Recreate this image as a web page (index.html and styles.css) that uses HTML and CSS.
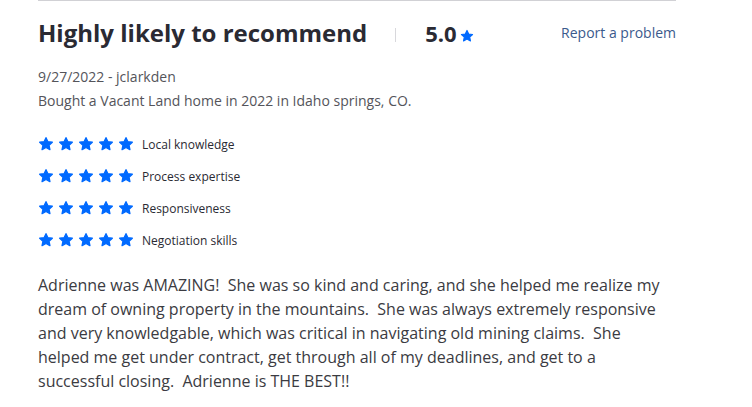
FILE: index.html
```html
<!DOCTYPE html>
<html>
<head>
<meta charset="utf-8">
<link rel="stylesheet" href="styles.css">
</head>
<body>
<svg width="0" height="0" class="defs">
  <defs>
    <symbol id="star" viewBox="0 0 24 24">
      <polygon points="12,2.5 14.9,8.6 21.5,9.4 16.6,13.9 17.9,20.5 12,17.2 6.1,20.5 7.4,13.9 2.5,9.4 9.1,8.6" fill="#006aff" stroke="#006aff" stroke-width="2" stroke-linejoin="round"/>
    </symbol>
  </defs>
</svg>
<div class="review">
  <div class="header">
    <h2 class="title">Highly likely to recommend</h2>
    <span class="sep"></span>
    <span class="score">5.0</span>
    <svg class="score-star"><use href="#star"/></svg>
    <a class="report">Report a problem</a>
  </div>
  <div class="meta">9/27/2022 - jclarkden</div>
  <div class="meta">Bought a Vacant Land home in 2022 in Idaho springs, CO.</div>
  <div class="ratings">
    <div class="rating"><span class="stars"><svg><use href="#star"/></svg><svg><use href="#star"/></svg><svg><use href="#star"/></svg><svg><use href="#star"/></svg><svg><use href="#star"/></svg></span><span class="label">Local knowledge</span></div>
    <div class="rating"><span class="stars"><svg><use href="#star"/></svg><svg><use href="#star"/></svg><svg><use href="#star"/></svg><svg><use href="#star"/></svg><svg><use href="#star"/></svg></span><span class="label">Process expertise</span></div>
    <div class="rating"><span class="stars"><svg><use href="#star"/></svg><svg><use href="#star"/></svg><svg><use href="#star"/></svg><svg><use href="#star"/></svg><svg><use href="#star"/></svg></span><span class="label">Responsiveness</span></div>
    <div class="rating"><span class="stars"><svg><use href="#star"/></svg><svg><use href="#star"/></svg><svg><use href="#star"/></svg><svg><use href="#star"/></svg><svg><use href="#star"/></svg></span><span class="label">Negotiation skills</span></div>
  </div>
  <p class="text">Adrienne was AMAZING!&nbsp; She was so kind and caring, and she helped me realize my dream of owning property in the mountains.&nbsp; She was always extremely responsive and very knowledgable, which was critical in navigating old mining claims.&nbsp; She helped me get under contract, get through all of my deadlines, and get to a successful closing.&nbsp; Adrienne is THE BEST!!</p>
</div>
</body>
</html>
```
FILE: styles.css
```css
html, body {
  margin: 0;
  padding: 0;
  background: #fff;
  font-family: "Open Sans", "Liberation Sans", sans-serif;
}
.defs { position: absolute; }
.review {
  margin-left: 38px;
  width: 638px;
  border-top: 1px solid #d1d1d5;
}
.header {
  display: flex;
  align-items: center;
  margin-top: 15px;
  height: 34px;
}
.title {
  margin: 0;
  font-size: 24px;
  font-weight: 700;
  color: #2a2a33;
  line-height: 34px;
}
.sep {
  width: 1px;
  height: 14px;
  background: #d8d8dc;
  margin: 3px 29px 0 28px;
}
.score {
  font-size: 22px;
  font-weight: 700;
  color: #2a2a33;
  line-height: 34px;
}
.score-star {
  width: 14px;
  height: 14px;
  margin: 6px 0 0 3px;
}
.report {
  margin-left: auto;
  font-size: 14px;
  color: #3b5a8c;
  line-height: 20px;
  margin-top: -1px;
}
.meta {
  font-size: 14px;
  color: #54545a;
  line-height: 24px;
}
.header + .meta { margin-top: 15px; }
.ratings {
  margin-top: 21px;
  display: flex;
  flex-direction: column;
  gap: 12px;
}
.rating {
  display: flex;
  align-items: center;
  height: 20px;
}
.stars {
  display: flex;
  gap: 4px;
}
.stars svg {
  width: 16px;
  height: 16px;
}
.label {
  margin-left: 8px;
  font-size: 12px;
  color: #2a2a33;
}
.text {
  margin: 23px 0 0;
  width: 625px;
  font-size: 16px;
  line-height: 24px;
  color: #3b3b42;
}
```
